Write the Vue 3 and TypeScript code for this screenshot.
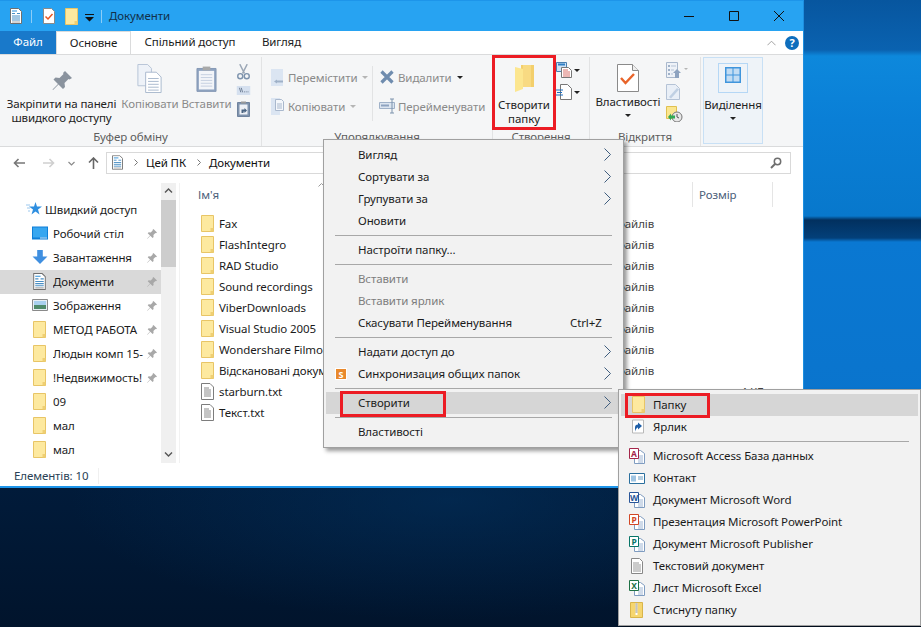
<script setup lang="ts">
interface MenuEntry {
  label?: string
  sep?: boolean
  arrow?: boolean
  disabled?: boolean
  active?: boolean
  hint?: string
  icon?: string
}

const navItems = [
  { label: 'Робочий стіл', icon: 'desk', pin: true },
  { label: 'Завантаження', icon: 'down', pin: true },
  { label: 'Документи', icon: 'doc', pin: true, active: true },
  { label: 'Зображення', icon: 'pic', pin: true },
  { label: 'МЕТОД РАБОТА', icon: 'folder', pin: true },
  { label: 'Людын комп 15-', icon: 'folder', pin: true },
  { label: '!Недвижимость!', icon: 'folder', pin: true },
  { label: '09', icon: 'folder', pin: false },
  { label: 'мал', icon: 'folder', pin: false },
  { label: 'мал', icon: 'folder', pin: false },
]

const files = [
  { name: 'Fax', icon: 'folder', type: 'Папка файлів', size: '' },
  { name: 'FlashIntegro', icon: 'folder', type: 'Папка файлів', size: '' },
  { name: 'RAD Studio', icon: 'folder', type: 'Папка файлів', size: '' },
  { name: 'Sound recordings', icon: 'folder', type: 'Папка файлів', size: '' },
  { name: 'ViberDownloads', icon: 'folder', type: 'Папка файлів', size: '' },
  { name: 'Visual Studio 2005', icon: 'folder', type: 'Папка файлів', size: '' },
  { name: 'Wondershare Filmora', icon: 'folder', type: 'Папка файлів', size: '' },
  { name: 'Відскановані документи', icon: 'folder', type: 'Папка файлів', size: '' },
  { name: 'starburn.txt', icon: 'txt', type: '', size: '4 КБ' },
  { name: 'Текст.txt', icon: 'txt', type: '', size: '' },
]

const contextMenu: MenuEntry[] = [
  { label: 'Вигляд', arrow: true },
  { label: 'Сортувати за', arrow: true },
  { label: 'Групувати за', arrow: true },
  { label: 'Оновити' },
  { sep: true },
  { label: 'Настроїти папку...' },
  { sep: true },
  { label: 'Вставити', disabled: true },
  { label: 'Вставити ярлик', disabled: true },
  { label: 'Скасувати Перейменування', hint: 'Ctrl+Z' },
  { sep: true },
  { label: 'Надати доступ до', arrow: true },
  { label: 'Синхронизация общих папок', arrow: true, icon: 'sync' },
  { sep: true },
  { label: 'Створити', arrow: true, active: true },
  { sep: true },
  { label: 'Властивості' },
]

const officeItems = [
  { label: 'Microsoft Access База данных', badge: 'A', color: '#a4264a' },
  { label: 'Контакт', badge: 'card', color: '#2a6f9e' },
  { label: 'Документ Microsoft Word', badge: 'W', color: '#2a5699' },
  { label: 'Презентация Microsoft PowerPoint', badge: 'P', color: '#d24726' },
  { label: 'Документ Microsoft Publisher', badge: 'P', color: '#077568' },
  { label: 'Текстовий документ', badge: 'txt', color: '' },
  { label: 'Лист Microsoft Excel', badge: 'X', color: '#1e7145' },
  { label: 'Стиснуту папку', badge: 'zip', color: '' },
]
</script>

<template>
  <div class="desktop">
    <svg class="defs" width="0" height="0">
      <defs>
        <symbol id="folder" viewBox="0 0 13 17">
          <path d="M.5.5h12v16H.5z" fill="#fde99f" stroke="#e8c566" />
          <path d="M9.500 13h3v3.500h-3z" fill="#efcf73" />
        </symbol>
        <symbol id="txt" viewBox="0 0 13 17">
          <path d="M.5.5h8.500l3.500 3.500v12.500H.5z" fill="#fff" stroke="#7d7d7d" />
          <path d="M3 5h5M3 7h7M3 9h7M3 11h7M3 13h7" stroke="#8a8a8a" fill="none" />
        </symbol>
        <symbol id="doc" viewBox="0 0 12 16">
          <path d="M.5.5h8l3 3v12H.5z" fill="#fff" stroke="#6f6f6f" />
          <path d="M2 3h5" stroke="#2d8fd8" />
          <path d="M2 5.500h3M7 5.500h3M2 8h8M2 10h8M2 12h8" stroke="#4a8fc4" fill="none" />
          <path d="M2 14h8" stroke="#aaa" />
        </symbol>
        <symbol id="pin" viewBox="0 0 24 24">
          <path d="M15 2l7 7-2.500 1.500-1-.5-4 4 .5 4-2 2-4.500-4.500L3 21l-.5-.5 5.500-5.500-4.500-4.500 2-2 4 .5 4-4-.5-1z" fill="currentColor" />
        </symbol>
        <symbol id="pinsmall" viewBox="0 0 12 12">
          <path d="M7.500 1L11 4.500l-1 .8-.6-.2-2 2 .2 2-1 1L4.300 7.800 1.500 10.800 1.200 10.500 4 7.500 1.700 5.300l1-1 2 .2 2-2-.2-.6z" fill="#a8a8a8" />
        </symbol>
      </defs>
    </svg>

    <div class="window">
      <header class="titlebar">
        <div class="qat">
          <svg class="i12" viewBox="0 0 12 16"><use href="#doc" /></svg>
          <i class="qat-sep"></i>
          <svg class="qat-check" viewBox="0 0 12 16">
            <path d="M.5.500h8l3 3v12H.5z" fill="#fff" stroke="#8a8a8a" />
            <path d="M2.500 8.500l2.500 2.500 4.500-5" stroke="#e8551f" stroke-width="1.500" fill="none" />
          </svg>
          <svg class="qat-folder" viewBox="0 0 13 17"><use href="#folder" /></svg>
          <svg class="qat-more" viewBox="0 0 9 8"><path d="M0 0h9v1H0zM0 3h9L4.500 7.500z" fill="#111" /></svg>
          <i class="qat-sep second"></i>
          <span class="win-title">Документи</span>
        </div>
        <div class="controls">
          <svg viewBox="0 0 10 10"><path d="M0 5.500h10" stroke="#111" fill="none" /></svg>
          <svg viewBox="0 0 10 10"><path d="M.5.500h9v9h-9z" stroke="#111" fill="none" /></svg>
          <svg viewBox="0 0 10 10"><path d="M0 0l10 10M10 0L0 10" stroke="#111" fill="none" /></svg>
        </div>
      </header>

      <nav class="tabs">
        <span class="tab file">Файл</span>
        <span class="tab current">Основне</span>
        <span class="tab share">Спільний доступ</span>
        <span class="tab view">Вигляд</span>
        <div class="tabs-right">
          <svg class="collapse" viewBox="0 0 10 6"><path d="M.5 5.500L5 1l4.500 4.500" stroke="#9a9a9a" fill="none" /></svg>
          <span class="help">?</span>
        </div>
      </nav>

      <section class="ribbon">
        <div class="group clip">
          <div class="group-body">
            <div class="big pin-btn">
              <svg class="big-icon pin-icon" viewBox="0 0 24 24"><use href="#pin" /></svg>
              <span class="dark">Закріпити на панелі<br />швидкого доступу</span>
            </div>
            <div class="big copy-btn">
              <svg class="big-icon" viewBox="0 0 26 30">
                <path d="M.5.500h10l4 4v18H.500z" fill="#eef2f8" stroke="#b5c3d6" />
                <path d="M8.500 8.500h11l5 5v16h-16z" fill="#fff" stroke="#a9b8cd" />
                <path d="M11 15h11M11 18h11M11 21h11M11 24h11M11 27h11" stroke="#a9b8cd" />
              </svg>
              <span>Копіювати</span>
            </div>
            <div class="big paste-btn">
              <svg class="big-icon" viewBox="0 0 22 28">
                <path d="M1 3.500h20v24H1z" fill="#8ea3c0" stroke="#8497b3" />
                <path d="M3 6h16v19.500H3z" fill="#f3f5f9" />
                <path d="M7 1.500h8v4H7z" fill="#a9a9a9" />
                <path d="M5 10h12M5 13h12M5 16h12M5 19h12M5 22h12" stroke="#c4cfdf" />
              </svg>
              <span>Вставити</span>
            </div>
            <div class="small-col tools">
              <svg viewBox="0 0 14 17">
                <path d="M3 0l5 10M11 0L6 10" stroke="#9aa6b5" stroke-width="1.500" fill="none" />
                <circle cx="3.500" cy="13" r="2.700" fill="none" stroke="#7d93ad" stroke-width="1.500" />
                <circle cx="10.500" cy="13" r="2.700" fill="none" stroke="#7d93ad" stroke-width="1.500" />
              </svg>
              <svg viewBox="0 0 15 10">
                <path d="M0 0h15v10H0z" fill="#d5e0ef" />
                <path d="M3 2l1.500 5M5 2l1.500 5M8 6.500h1M10 6.500h1M12 6.500h1" stroke="#64758c" fill="none" />
              </svg>
              <svg viewBox="0 0 13 16">
                <path d="M.5 1.500h12v14H.500z" fill="#7f93ad" stroke="#6f839e" />
                <path d="M2.500 3.500h8v10h-8z" fill="#eef1f6" />
                <path d="M4 .5h5v2H4z" fill="#999" />
                <path d="M4.500 12V8.500h3V7L10 9.500 7.500 12v-1.500h-1V12z" fill="#4a6482" />
              </svg>
            </div>
          </div>
          <div class="group-label">Буфер обміну</div>
        </div>

        <div class="group organize">
          <div class="group-body">
            <div class="org-col move">
              <div class="row-btn">
                <svg viewBox="0 0 13 17">
                  <path d="M0 0h12v17H0z" fill="#dbe5f2" />
                  <path d="M6 10.500l-3 2 3 2v-1h6v-2H6z" fill="#9fb1c8" />
                </svg>
                <span>Перемістити</span><i class="caret off"></i>
              </div>
              <div class="row-btn">
                <svg viewBox="0 0 13 17">
                  <path d="M0 0h9v17H0z" fill="#dbe5f2" />
                  <path d="M4.500 1.500h6l2 2v9h-8z" fill="#f4f7fb" stroke="#a9b8cd" />
                  <path d="M6 6h5M6 8h5M6 10h5" stroke="#a9b8cd" />
                </svg>
                <span>Копіювати</span><i class="caret off"></i>
              </div>
            </div>
            <i class="inner-sep"></i>
            <div class="org-col act">
              <div class="row-btn">
                <svg viewBox="0 0 14 14"><path d="M1.500 1.500l11 11M12.500 1.500l-11 11" stroke="#6f8cae" stroke-width="3.200" fill="none" /></svg>
                <span>Видалити</span><i class="caret"></i>
              </div>
              <div class="row-btn">
                <svg class="rename" viewBox="0 0 17 16">
                  <path d="M.5 4.500h15v6H.5z" fill="#dce5f0" stroke="#9fb1c8" />
                  <path d="M2 6.500h8v2H2z" fill="#8ea3c0" />
                  <path d="M11 1h4M13 1v14M11 15h4" stroke="#7d93ad" fill="none" />
                </svg>
                <span>Перейменувати</span>
              </div>
            </div>
          </div>
          <div class="group-label">Упорядкування</div>
        </div>

        <div class="group create">
          <div class="group-body">
            <div class="big new-btn">
              <svg class="big-icon" viewBox="0 0 19 28">
                <path d="M6 0h13v22H6z" fill="#f3cf6c" />
                <path d="M8 0h8v22H8z" fill="#f8da82" />
                <path d="M0 2l8 2v20l-8 3z" fill="#fce68f" />
              </svg>
              <span class="dark">Створити<br />папку</span>
            </div>
            <div class="small-col new-small">
              <div class="small-row">
                <svg viewBox="0 0 16 16">
                  <path d="M.5.500h10v9H.5z" fill="#cfe2f5" stroke="#4a7fb0" />
                  <path d="M2 1.500h7v2H2z" fill="#2f7fc4" />
                  <path d="M5.500 5.500h7l3 3v7h-10z" fill="#fff" stroke="#777" />
                  <path d="M7 8h5M7 10h7M7 12h7M7 14h7" stroke="#d9706a" />
                </svg>
                <i class="caret"></i>
              </div>
              <div class="small-row">
                <svg viewBox="0 0 16 16">
                  <path d="M4.500.5h7l4 4v11h-11z" fill="#fff" stroke="#777" />
                  <path d="M0 6h7M1 8.500h5M0 11h7" stroke="#1f6fc0" />
                </svg>
                <i class="caret"></i>
              </div>
            </div>
          </div>
          <div class="group-label">Створення</div>
        </div>

        <div class="group open">
          <div class="group-body">
            <div class="big prop-btn">
              <svg class="big-icon" viewBox="0 0 22 28">
                <path d="M.5.500h15l6 6v21H.500z" fill="#fff" stroke="#8a8a8a" />
                <path d="M15.500.5v6h6" fill="#eee" stroke="#8a8a8a" />
                <path d="M4 14l4.500 5L17 10" stroke="#e8642a" stroke-width="2.400" fill="none" />
              </svg>
              <span class="dark">Властивості</span>
              <i class="caret"></i>
            </div>
            <div class="small-col open-small">
              <svg viewBox="0 0 22 16">
                <path d="M.5.500h11v15H.5z" fill="#eef2f8" stroke="#a9b8cd" />
                <path d="M2 3h2v2H2zM2 7h2v2H2zM2 11h2v2H2z" fill="#9fb1c8" />
                <path d="M5 4h5M5 8h3M5 12h2" stroke="#b5c3d6" />
                <path d="M9 16v-5H7l4-4 4 4h-2v5z" fill="#8ea3c0" />
                <path d="M18 6h4l-2 2z" fill="#b5b5b5" />
              </svg>
              <svg viewBox="0 0 22 16">
                <path d="M.5.500h9l4 4v11H.5z" fill="#e9eff7" stroke="#b5c3d6" />
                <path d="M3 13l8-9 2 1.500-8 9z" fill="#c0d0e3" />
              </svg>
              <svg viewBox="0 0 22 16">
                <path d="M.5.500h10v12H.5z" fill="#fbe68f" stroke="#e0c050" />
                <circle cx="11" cy="11" r="5" fill="#e7e7e7" stroke="#777" />
                <path d="M11 8v3l2 1" stroke="#555" fill="none" />
                <path d="M2 11l3-3.500v2h4v3H5v2z" fill="#32a852" />
              </svg>
            </div>
          </div>
          <div class="group-label">Відкриття</div>
        </div>

        <div class="group select">
          <div class="select-icon">
            <svg viewBox="0 0 16 16">
              <path d="M0 0h16v16H0z" fill="#3f95dc" />
              <path d="M1.500 1.500h6v6h-6zM8.500 1.500h6v6h-6zM1.500 8.500h6v6h-6zM8.500 8.500h6v6h-6z" fill="#c2dcf3" />
            </svg>
          </div>
          <span class="dark">Виділення</span>
          <i class="caret"></i>
        </div>
      </section>

      <div class="addressbar">
        <svg class="nav-arrow back" viewBox="0 0 12 10"><path d="M12 5H1.500M5.500 1l-4 4 4 4" stroke="#777" stroke-width="1.600" fill="none" /></svg>
        <svg class="nav-arrow fwd" viewBox="0 0 12 10"><path d="M0 5h10.500M6.500 1l4 4-4 4" stroke="#cfcfcf" stroke-width="1.600" fill="none" /></svg>
        <svg class="nav-arrow hist" viewBox="0 0 7 5"><path d="M.5 1l3 3 3-3" stroke="#8a8a8a" stroke-width="1.200" fill="none" /></svg>
        <svg class="nav-arrow up" viewBox="0 0 11 12"><path d="M5.500 12V1.500M1 5.500l4.500-4.500L10 5.500" stroke="#666" stroke-width="1.600" fill="none" /></svg>
        <div class="address">
          <svg class="addr-doc" viewBox="0 0 12 16"><use href="#doc" /></svg>
          <svg class="crumb" viewBox="0 0 4 7"><path d="M.5.500l3 3-3 3" stroke="#777" fill="none" /></svg>
          <span>Цей ПК</span>
          <svg class="crumb" viewBox="0 0 4 7"><path d="M.5.500l3 3-3 3" stroke="#777" fill="none" /></svg>
          <span>Документи</span>
          <svg class="search" viewBox="0 0 12 12">
            <circle cx="7.500" cy="4.500" r="3.200" fill="none" stroke="#6e6e6e" stroke-width="1.500" />
            <path d="M5 7l-4 4" stroke="#6e6e6e" stroke-width="2" />
          </svg>
        </div>
      </div>

      <div class="main">
        <aside class="navpane">
          <div class="nav-list">
            <div class="nav-row quick">
              <svg viewBox="0 0 16 14">
                <path d="M9.500 0l1.500 4.500h5l-4 3 1.500 5-4-3-4 3 1.500-5-4-3h5z" fill="#2f8fe0" />
                <path d="M0 3h4M1 6h3M2 9h2" stroke="#9cc8ee" />
              </svg>
              <span>Швидкий доступ</span>
            </div>
            <div v-for="item in navItems" :key="item.label + item.icon" class="nav-row" :class="{ active: item.active }">
              <svg v-if="item.icon === 'folder'" class="nav-icon" viewBox="0 0 13 17"><use href="#folder" /></svg>
              <svg v-else-if="item.icon === 'doc'" class="nav-icon" viewBox="0 0 12 16"><use href="#doc" /></svg>
              <svg v-else-if="item.icon === 'desk'" class="nav-icon wide" viewBox="0 0 16 13">
                <path d="M0 0h16v13H0z" fill="#0f7fd8" />
                <path d="M1 1h14v10H1z" fill="#38a7f0" />
                <path d="M8 11h7v1H8z" fill="#cfe6f9" />
              </svg>
              <svg v-else-if="item.icon === 'down'" class="nav-icon wide" viewBox="0 0 16 15">
                <path d="M5 0h6v7h5l-8 8-8-8h5z" fill="#3f8fe0" />
              </svg>
              <svg v-else class="nav-icon wide" viewBox="0 0 16 12">
                <path d="M.5.500h15v11H.5z" fill="#e8eef4" stroke="#8a8a8a" />
                <path d="M2 2h12v4H2z" fill="#a9d0ee" />
                <path d="M2 6h12v4H2z" fill="#4f8a6a" />
              </svg>
              <span class="nav-label">{{ item.label }}</span>
              <svg v-if="item.pin" class="nav-pin" viewBox="0 0 12 12"><use href="#pinsmall" /></svg>
            </div>
          </div>
          <div class="nav-scroll">
            <svg viewBox="0 0 9 5"><path d="M1 4.500l3.500-3.500L8 4.500" stroke="#555" stroke-width="1.400" fill="none" /></svg>
            <div class="thumb"></div>
            <svg class="bottom" viewBox="0 0 9 5"><path d="M1 .500L4.500 4 8 .500" stroke="#555" stroke-width="1.400" fill="none" /></svg>
          </div>
        </aside>

        <div class="content">
          <div class="col-head">
            <span class="h-name">Ім'я</span>
            <svg class="h-sort" viewBox="0 0 7 4"><path d="M.5 3.500l3-3 3 3" stroke="#9a9a9a" fill="none" /></svg>
            <i class="h-sep sep-a"></i>
            <span class="h-size">Розмір</span>
            <i class="h-sep sep-b"></i>
          </div>
          <div v-for="f in files" :key="f.name" class="file-row">
            <svg class="file-icon" viewBox="0 0 13 17"><use :href="'#' + f.icon" /></svg>
            <span class="file-name">{{ f.name }}</span>
            <span class="file-type">{{ f.type }}</span>
            <span class="file-size">{{ f.size }}</span>
          </div>
        </div>
      </div>

      <footer class="status">
        <span>Елементів: 10</span>
        <i></i>
      </footer>
    </div>

    <div class="menu context">
      <template v-for="(m, i) in contextMenu" :key="i">
        <div v-if="m.sep" class="menu-sep"></div>
        <div v-else class="menu-item" :class="{ disabled: m.disabled, active: m.active }">
          <svg v-if="m.icon" class="sync" viewBox="0 0 12 12">
            <path d="M0 0h12v12H0z" fill="#fff" />
            <path d="M1 1h10v10H1z" fill="#e9892c" />
            <text x="6" y="9.500" text-anchor="middle" font-size="9" font-weight="700" fill="#fff">S</text>
          </svg>
          <span class="menu-label">{{ m.label }}</span>
          <span v-if="m.hint" class="menu-hint">{{ m.hint }}</span>
          <svg v-if="m.arrow" class="chevron" viewBox="0 0 7 13"><path d="M.5.500l6 6-6 6" stroke="#3f5d7e" fill="none" /></svg>
        </div>
      </template>
    </div>

    <div class="menu sub">
      <div class="menu-item active">
        <svg class="sub-icon" viewBox="0 0 13 17"><use href="#folder" /></svg>
        <span class="menu-label">Папку</span>
      </div>
      <div class="menu-item">
        <svg class="sub-icon" viewBox="0 0 13 14">
          <path d="M.5.500h11v13H.5z" fill="#fff" stroke="#b8b8b8" />
          <path d="M3 12V8c0-2 1-3 3-3V3l4 3.500L6 10V8C5 8 4 9 3 12z" fill="#1f5fa8" />
        </svg>
        <span class="menu-label">Ярлик</span>
      </div>
      <div class="menu-sep"></div>
      <div v-for="o in officeItems" :key="o.label" class="menu-item">
        <svg class="sub-icon office" viewBox="0 0 16 16">
          <template v-if="o.badge === 'txt'">
            <path d="M2.500.5h8l3 3v12h-11z" fill="#fff" stroke="#888" />
            <path d="M4 5h6M4 7h8M4 9h8M4 11h8M4 13h8" stroke="#999" />
          </template>
          <template v-else-if="o.badge === 'zip'">
            <path d="M1.500.5h12v15h-12z" fill="#f6d66f" stroke="#d9b54a" />
            <path d="M6.500 1h2v12h-2z" fill="#fff" />
            <path d="M6.500 2h2M6.500 4h2M6.500 6h2M6.500 8h2M6.500 10h2" stroke="#888" />
          </template>
          <template v-else-if="o.badge === 'card'">
            <path d="M.5 3.500h15v10H.5z" fill="#fff" stroke="#2a6f9e" />
            <path d="M2 5.500h5v6H2z" fill="#9ec4e2" />
            <path d="M9 7h5M9 9h5" stroke="#6a9cc0" />
          </template>
          <template v-else>
            <path d="M5.500 2.500h6l4 3v10h-10z" fill="#fff" stroke="#7f9cc0" />
            <path d="M9 8h5M9 10h5M9 12h5M9 14h5" stroke="#9fb6d4" />
            <path d="M.5.500h9v10h-9z" fill="#fff" :stroke="o.color" />
            <text x="5" y="8.500" text-anchor="middle" font-size="8.500" font-weight="700" :fill="o.color">{{ o.badge }}</text>
          </template>
        </svg>
        <span class="menu-label">{{ o.label }}</span>
      </div>
    </div>

    <i class="mark mark-ribbon"></i>
    <i class="mark mark-context"></i>
    <i class="mark mark-sub"></i>
  </div>
</template>

<style>
html,
body {
  margin: 0;
  overflow: hidden;
}
</style>

<style scoped>
.desktop {
  position: relative;
  width: 921px;
  height: 627px;
  overflow: hidden;
  font-family: "Noto Sans", "Open Sans", sans-serif;
  font-size: 11.5px;
  letter-spacing: -0.1px;
  color: #1b1b1b;
  background:
    radial-gradient(ellipse 380px 120px at 450px 500px, rgba(3, 50, 95, 0.55), rgba(3, 50, 95, 0) 100%) no-repeat,
    linear-gradient(180deg,
      #07569f 0,
      #0a62b0 50px,
      #0d88dc 56px,
      #0a7fd6 120px,
      #0878cc 216px,
      #02305f 220px,
      #03407a 238px,
      #0a78d2 242px,
      #0a72ca 488px,
      #011b3a 488px,
      #01142c 627px);
}
.defs {
  position: absolute;
}
.window {
  position: absolute;
  left: 0;
  top: 0;
  width: 804px;
  height: 488px;
  box-sizing: border-box;
  display: flex;
  flex-direction: column;
  background: #fff;
  border-right: 1px solid #1d8fe0;
  border-top: 1px solid #1d95ea;
  border-bottom: 2px solid #1d95ea;
}
.titlebar {
  height: 30px;
  flex: none;
  background: #27a3f2;
  display: flex;
  justify-content: space-between;
  align-items: center;
}
.qat {
  display: flex;
  align-items: center;
  padding-left: 10px;
}
.i12 {
  width: 12px;
  height: 16px;
}
.qat-sep {
  width: 1px;
  height: 13px;
  background: #8ccdf7;
  margin-left: 9px;
}
.qat-check {
  width: 12px;
  height: 16px;
  margin-left: 11px;
}
.qat-folder {
  width: 13px;
  height: 17px;
  margin-left: 10px;
}
.qat-more {
  width: 9px;
  height: 8px;
  margin-left: 7px;
  margin-top: 3px;
}
.qat-sep.second {
  margin-left: 7px;
}
.win-title {
  margin-left: 7px;
  padding-bottom: 1px;
  color: #12304a;
}
.controls {
  display: flex;
  padding-right: 19px;
  gap: 35px;
}
.controls svg {
  width: 10px;
  height: 10px;
}
.tabs {
  height: 23px;
  flex: none;
  display: flex;
  align-items: stretch;
  position: relative;
}
.tab {
  display: flex;
  align-items: center;
  justify-content: center;
  box-sizing: border-box;
  padding-bottom: 2px;
}
.tab.file {
  width: 56px;
  background: #1979ca;
  color: #fff;
}
.tab.current {
  width: 75px;
  border: 1px solid #dadbdc;
  border-bottom: 0;
  background: #fff;
}
.tab.share {
  width: 118px;
}
.tab.view {
  width: 65px;
}
.tabs-right {
  margin-left: auto;
  display: flex;
  align-items: center;
  gap: 9px;
  padding-right: 4px;
}
.collapse {
  width: 9px;
  height: 6px;
}
.help {
  width: 14px;
  height: 14px;
  border-radius: 50%;
  background: #0e6ebd;
  color: #fff;
  font-weight: 700;
  font-size: 11px;
  line-height: 14px;
  text-align: center;
}
.ribbon {
  height: 93px;
  flex: none;
  box-sizing: border-box;
  display: flex;
  background: #f5f6f7;
  border-top: 1px solid #dadbdc;
  border-bottom: 1px solid #dadbdc;
  color: #8a8a8a;
}
.group {
  position: relative;
  box-sizing: border-box;
  display: flex;
  flex-direction: column;
  padding-top: 2px;
}
.group-body {
  flex: 1;
  display: flex;
  border-right: 1px solid #e2e3e4;
  min-height: 0;
}
.group-label {
  height: 17px;
  text-align: center;
  color: #5e5e5e;
  line-height: 15px;
  border-right: 1px solid #e2e3e4;
}
.clip {
  width: 262px;
}
.organize {
  width: 231px;
}
.create {
  width: 97px;
}
.open {
  width: 111px;
}
.big {
  display: flex;
  flex-direction: column;
  align-items: center;
  text-align: center;
  line-height: 14px;
  white-space: nowrap;
  flex: none;
}
.big-icon {
  display: block;
}
.dark {
  color: #222;
}
.pin-btn {
  width: 123px;
  padding-top: 12px;
}
.pin-icon {
  width: 24px;
  height: 24px;
  margin-bottom: 4px;
  color: #8a939e;
}
.copy-btn {
  width: 54px;
  padding-top: 7px;
}
.copy-btn .big-icon {
  width: 26px;
  height: 29px;
  margin-bottom: 4px;
}
.paste-btn {
  width: 59px;
  padding-top: 7px;
}
.paste-btn .big-icon {
  width: 21px;
  height: 29px;
  margin-bottom: 4px;
}
.small-col {
  display: flex;
  flex-direction: column;
}
.tools {
  width: 14px;
  align-items: center;
  padding-top: 7px;
  gap: 6px;
}
.tools svg:nth-child(1) {
  width: 13px;
  height: 16px;
}
.tools svg:nth-child(2) {
  width: 15px;
  height: 9px;
}
.tools svg:nth-child(3) {
  width: 13px;
  height: 16px;
}
.org-col {
  display: flex;
  flex-direction: column;
  gap: 11px;
  padding-top: 11px;
}
.move {
  width: 110px;
  padding-left: 9px;
  box-sizing: border-box;
}
.act {
  padding-left: 7px;
}
.row-btn {
  display: flex;
  align-items: center;
  height: 18px;
  white-space: nowrap;
}
.row-btn svg {
  width: 13px;
  height: 17px;
  margin-right: 4px;
}
.act .row-btn svg {
  width: 14px;
  height: 14px;
  margin-right: 4px;
}
.act .row-btn svg.rename {
  width: 17px;
  height: 16px;
  margin-right: 2px;
  margin-left: -1px;
}
.caret {
  display: inline-block;
  width: 0;
  height: 0;
  border-left: 3px solid transparent;
  border-right: 3px solid transparent;
  border-top: 3px solid #222;
  margin-left: 5px;
}
.caret.off {
  border-top-color: #b5b5b5;
}
.inner-sep {
  width: 1px;
  height: 55px;
  margin-top: 9px;
  background: #e2e3e4;
}
.new-btn {
  width: 62px;
  padding-top: 8px;
}
.new-btn .big-icon {
  width: 19px;
  height: 28px;
  margin-bottom: 5px;
}
.new-small {
  padding: 5px 0 0 1px;
  gap: 6px;
}
.small-row {
  display: flex;
  align-items: center;
}
.small-row svg {
  width: 16px;
  height: 16px;
}
.small-row .caret {
  margin-left: 2px;
}
.prop-btn {
  width: 76px;
  padding-top: 7px;
}
.prop-btn .big-icon {
  width: 22px;
  height: 28px;
  margin-bottom: 3px;
}
.prop-btn .caret {
  margin-top: 5px;
  margin-left: 0;
}
.open-small {
  padding: 5px 0 0 0;
  gap: 6px;
}
.open-small svg {
  width: 22px;
  height: 16px;
}
.select {
  width: 60px;
  height: 87px;
  margin: 2px 0 0 2px;
  padding-top: 5px;
  align-items: center;
  background: #eef3f8;
  border: 1px solid #c8e0f5;
  line-height: 14px;
}
.select-icon {
  width: 30px;
  height: 30px;
  box-sizing: border-box;
  border: 1px solid #b5d7f5;
  display: flex;
  align-items: flex-start;
  justify-content: center;
  padding-top: 3px;
  margin-bottom: 5px;
}
.select-icon svg {
  width: 16px;
  height: 16px;
}
.select .caret {
  margin: 5px 0 0;
}
.addressbar {
  height: 36px;
  flex: none;
  box-sizing: border-box;
  padding-bottom: 4px;
  position: relative;
  display: flex;
  align-items: center;
}
.nav-arrow {
  flex: none;
}
.back {
  width: 12px;
  height: 10px;
  margin-left: 13px;
}
.fwd {
  width: 12px;
  height: 10px;
  margin-left: 18px;
}
.hist {
  width: 7px;
  height: 5px;
  margin-left: 13px;
}
.up {
  width: 11px;
  height: 12px;
  margin-left: 13px;
}
.address {
  width: 685px;
  height: 22px;
  margin-left: 7px;
  box-sizing: border-box;
  border: 1px solid #d9d9d9;
  display: flex;
  align-items: center;
  color: #111;
  padding-left: 5px;
  padding-bottom: 1px;
}
.addr-doc {
  width: 11px;
  height: 15px;
}
.crumb {
  width: 4px;
  height: 7px;
  margin: 0 8px 0 11px;
}
.search {
  width: 12px;
  height: 12px;
  margin-left: auto;
  margin-right: 8px;
}
.main {
  flex: 1;
  display: flex;
  min-height: 0;
}
.navpane {
  width: 180px;
  flex: none;
  display: flex;
  border-right: 1px solid #f2f2f2;
  box-sizing: border-box;
}
.nav-list {
  width: 161px;
  padding-top: 15px;
}
.nav-row {
  height: 24px;
  box-sizing: border-box;
  padding-bottom: 2px;
  display: flex;
  align-items: center;
  position: relative;
  padding-left: 33px;
  white-space: nowrap;
}
.nav-row.active {
  background: #d9d9d9;
}
.nav-row.quick {
  padding-left: 26px;
}
.quick svg {
  width: 16px;
  height: 14px;
  margin-right: 3px;
}
.nav-icon {
  width: 13px;
  height: 17px;
  margin-right: 7px;
  flex: none;
}
.nav-icon.wide {
  width: 16px;
  height: 14px;
  margin-left: -1px;
  margin-right: 5px;
}
.nav-label {
  overflow: hidden;
  width: 92px;
}
.nav-pin {
  position: absolute;
  left: 146px;
  top: 6px;
  width: 12px;
  height: 12px;
}
.nav-scroll {
  width: 15px;
  position: relative;
  background: #f0f0f0;
  display: flex;
  justify-content: center;
}
.nav-scroll svg {
  width: 9px;
  height: 5px;
  margin-top: 5px;
}
.nav-scroll svg.bottom {
  position: absolute;
  bottom: 6px;
  margin: 0;
}
.thumb {
  position: absolute;
  left: 0;
  right: 0;
  top: 17px;
  height: 67px;
  background: #cdcdcd;
}
.content {
  flex: 1;
  min-width: 0;
}
.col-head {
  height: 25px;
  margin-top: -1px;
  position: relative;
  display: flex;
  align-items: center;
  color: #4c607a;
  margin-bottom: 7px;
}
.h-name {
  margin-left: 18px;
}
.h-sort {
  position: absolute;
  left: 138px;
  top: 1px;
  width: 7px;
  height: 4px;
}
.h-size {
  position: absolute;
  left: 519px;
}
.h-sep {
  position: absolute;
  top: 0;
  width: 1px;
  height: 25px;
  background: #e5e5e5;
}
.sep-a {
  left: 512px;
}
.sep-b {
  left: 592px;
}
.file-row {
  height: 21px;
  box-sizing: border-box;
  padding-bottom: 2px;
  display: flex;
  align-items: center;
  padding-left: 21px;
  white-space: nowrap;
}
.file-icon {
  width: 13px;
  height: 17px;
  flex: none;
  margin-right: 5px;
}
.file-name {
  width: 180px;
  flex: none;
}
.file-type {
  flex: none;
  width: 124px;
  margin-left: 181px;
  color: #444;
}
.file-size {
  flex: none;
  width: 60px;
  text-align: right;
  color: #444;
}
.status {
  height: 23px;
  flex: none;
  box-sizing: border-box;
  padding-top: 2px;
  display: flex;
  align-items: center;
  padding-left: 14px;
  color: #2a3f55;
}
.status i {
  width: 1px;
  height: 16px;
  background: #f0f0f0;
  margin-left: 10px;
}
.menu {
  position: absolute;
  box-sizing: border-box;
  padding: 4px 2px;
  background: #f2f2f2;
  border: 1px solid #a0a0a0;
  box-shadow: 3px 3px 4px rgba(0, 0, 0, 0.4);
}
.context {
  left: 323px;
  top: 139px;
  width: 301px;
}
.sub {
  left: 618px;
  top: 389px;
  width: 303px;
}
.menu-item {
  height: 22px;
  box-sizing: border-box;
  padding-bottom: 2px;
  display: flex;
  align-items: center;
  position: relative;
  padding-left: 32px;
  color: #1b1b1b;
  white-space: nowrap;
}
.menu-item.active {
  background: #d6d6d6;
}
.menu-item.disabled {
  color: #7d7d7d;
}
.menu-sep {
  height: 1px;
  margin: 3px 9px;
  background: #a8a8a8;
}
.menu-hint {
  position: absolute;
  left: 244px;
}
.chevron {
  position: absolute;
  right: 10px;
  top: 4px;
  width: 7px;
  height: 13px;
}
.sync {
  position: absolute;
  left: 9px;
  top: 5px;
  width: 12px;
  height: 12px;
}
.sub-icon {
  position: absolute;
  left: 11px;
  top: 2px;
  width: 13px;
  height: 17px;
}
.sub-icon.office {
  left: 8px;
  top: 3px;
  width: 16px;
  height: 16px;
}
.mark {
  position: absolute;
  box-sizing: border-box;
  border: 3px solid #ec1c24;
  pointer-events: none;
}
.mark-ribbon {
  left: 492px;
  top: 55px;
  width: 64px;
  height: 75px;
}
.mark-context {
  left: 340px;
  top: 391px;
  width: 106px;
  height: 26px;
}
.mark-sub {
  left: 625px;
  top: 393px;
  width: 85px;
  height: 25px;
}
</style>
